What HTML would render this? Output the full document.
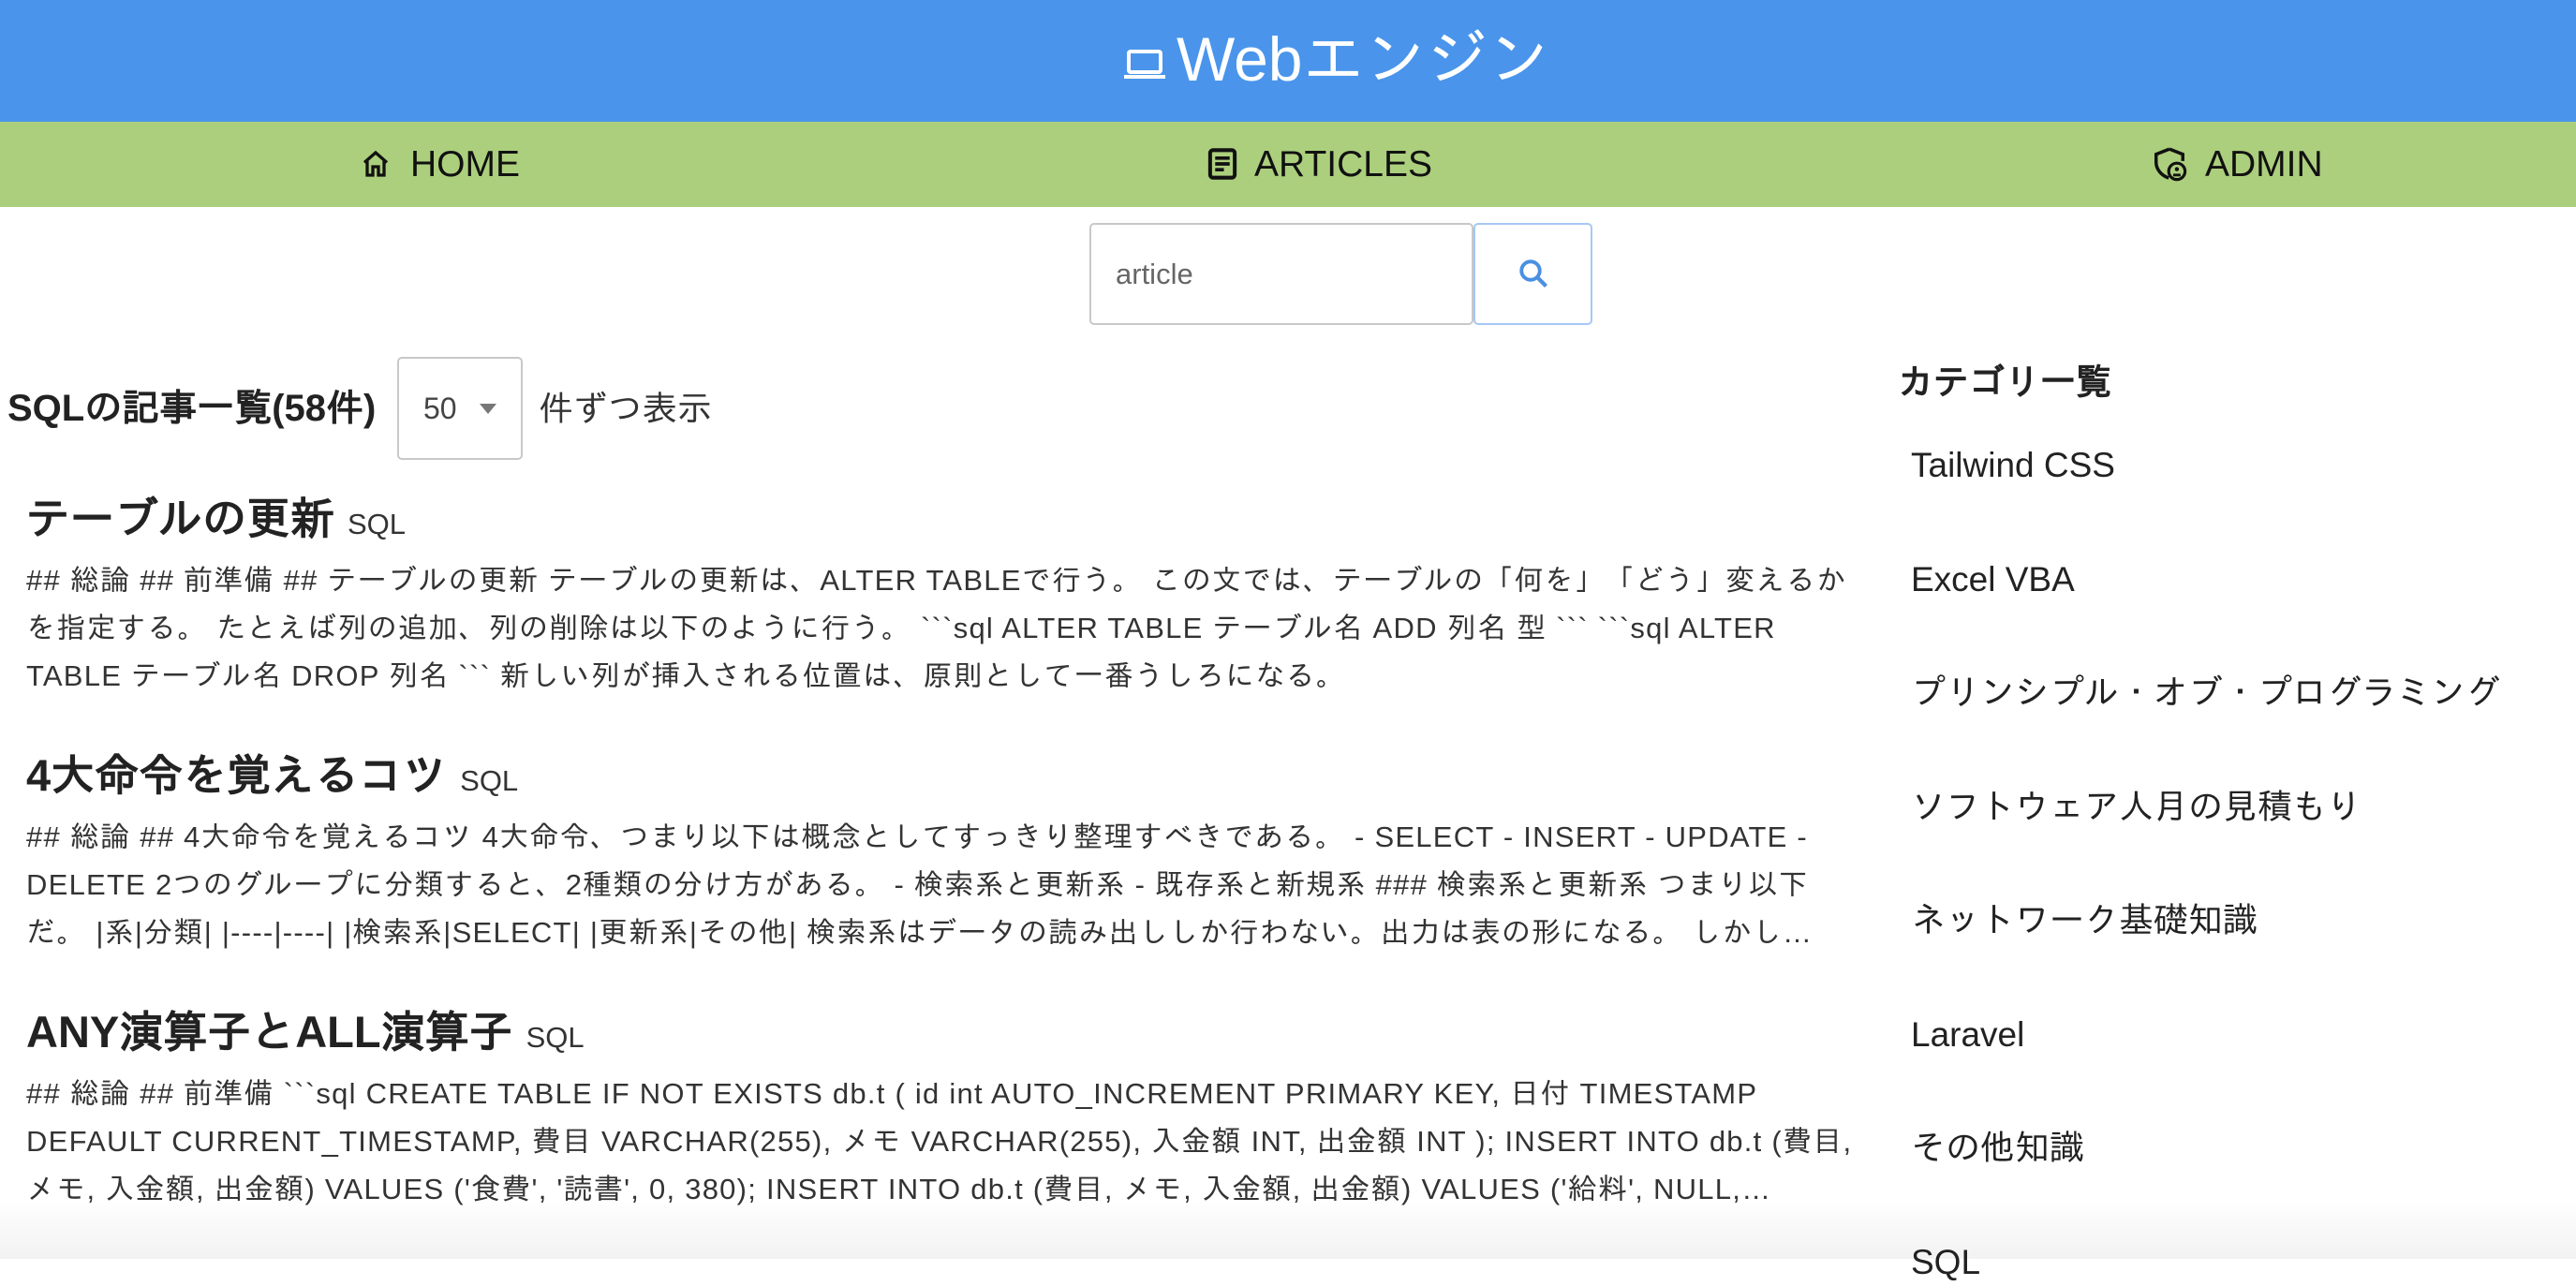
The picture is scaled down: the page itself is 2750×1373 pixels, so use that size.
<!DOCTYPE html>
<html><head><meta charset="utf-8"><style>
*{margin:0;padding:0;box-sizing:border-box}
html,body{width:2750px;height:1344px;background:#fff}
body{overflow:hidden;font-family:"Liberation Sans","IPAGothic","Noto Sans CJK JP",sans-serif;color:#222;position:relative}
.hdr{position:absolute;left:0;top:0;width:2750px;height:130px;background:#4a95eb}
.title{position:absolute;left:1200px;top:18px;color:#fff;font-size:66px;line-height:90px;white-space:nowrap}
.title svg{vertical-align:middle;margin-right:12px}
.nav{position:absolute;left:0;top:130px;width:2750px;height:91px;background:#accf7d}
.ni{position:absolute;top:0;height:91px;line-height:91px;font-size:39px;color:#111;white-space:nowrap}
.ni svg{vertical-align:middle;margin-right:18px;position:relative;top:-3px}
.inp{position:absolute;left:1163px;top:238px;width:410px;height:109px;border:2px solid #c8c8c8;border-radius:5px;font-size:31px;color:#666;padding-left:26px;line-height:105px}
.btn{position:absolute;left:1573px;top:238px;width:127px;height:109px;border:2px solid #a6c8f4;border-radius:5px;text-align:center;padding-top:34px}
.h{position:absolute;left:8px;top:414px;font-size:40px;font-weight:bold;color:#222;white-space:nowrap}
.sel{position:absolute;left:424px;top:381px;width:134px;height:110px;border:2px solid #c8c8c8;border-radius:5px;font-size:32px;color:#444;padding-left:26px;line-height:106px}
.sel span{position:absolute;left:86px;top:48px;width:0;height:0;border-left:9px solid transparent;border-right:9px solid transparent;border-top:11px solid #777}
.ken{position:absolute;left:575px;top:416px;font-size:37px;color:#333;white-space:nowrap}
.art{position:absolute;left:28px;width:1955px}
.art h2{font-size:47px;font-weight:bold;line-height:64px;color:#222;white-space:nowrap}
.art h2 small{font-size:31px;font-weight:normal;margin-left:14px;color:#333}
.art p{font-size:31px;letter-spacing:1.25px;line-height:51px;color:#333;margin-top:2px;height:153px;overflow:hidden}
.side{position:absolute;left:2026px;width:720px}
.side h3{font-size:38px;font-weight:bold;color:#222;white-space:nowrap}
.it{position:absolute;left:2040px;font-size:37px;color:#222;white-space:nowrap;line-height:50px}
.shadow{position:absolute;left:0;top:1280px;width:2750px;height:64px;background:linear-gradient(to bottom,rgba(0,0,0,0),rgba(0,0,0,0.05))}
</style></head><body>
<div class="hdr"><div class="title"><svg width="44" height="34" viewBox="0 0 44 34"><rect x="5" y="3" width="34" height="22" rx="2" fill="none" stroke="#fff" stroke-width="4"/><rect x="0" y="28" width="44" height="4" fill="#fff"/></svg>Webエンジン</div></div>
<div class="nav">
<div class="ni" style="left:382px"><svg width="38" height="36" viewBox="0 0 24 24"><path d="M4 11 12 4l8 7M6 10v10h4v-6h4v6h4V10" fill="none" stroke="#111" stroke-width="2.2"/></svg>HOME</div>
<div class="ni" style="left:1289px"><svg width="32" height="34" viewBox="0 0 20 22"><rect x="1.5" y="1.5" width="17" height="19" rx="2" fill="none" stroke="#111" stroke-width="2.6"/><path d="M5 7h10M5 11h10M5 15h6" stroke="#111" stroke-width="2.4"/></svg>ARTICLES</div>
<div class="ni" style="left:2296px"><svg width="40" height="38" viewBox="0 0 24 24"><path d="M12 2 3 5.5V11c0 5 4 9 8.5 10.5" fill="none" stroke="#111" stroke-width="2.2"/><path d="M12 2l9 3.5V10" fill="none" stroke="#111" stroke-width="2.2"/><circle cx="17" cy="17" r="5.5" fill="none" stroke="#111" stroke-width="2"/><circle cx="17" cy="15.5" r="1.4" fill="#111"/><path d="M14.5 19.5h5" stroke="#111" stroke-width="1.8"/></svg>ADMIN</div>
</div>
<div class="inp">article</div>
<div class="btn"><svg width="36" height="36" viewBox="0 0 24 24"><circle cx="10" cy="10" r="6.5" fill="none" stroke="#4a90e2" stroke-width="2.6"/><path d="M15 15l6 6" stroke="#4a90e2" stroke-width="2.8"/></svg></div>
<div class="h">SQLの記事一覧(58件)</div>
<div class="sel">50<span></span></div>
<div class="ken">件ずつ表示</div>
<div class="side" style="top:388px"><h3>カテゴリ一覧</h3></div>
<div class="it" style="top:472px">Tailwind CSS</div>
<div class="it" style="top:594px">Excel VBA</div>
<div class="it" style="top:715px">プリンシプル・オブ・プログラミング</div>
<div class="it" style="top:837px">ソフトウェア人月の見積もり</div>
<div class="it" style="top:958px">ネットワーク基礎知識</div>
<div class="it" style="top:1080px">Laravel</div>
<div class="it" style="top:1201px">その他知識</div>
<div class="it" style="top:1323px">SQL</div>
<div class="art" style="top:522px"><h2>テーブルの更新<small>SQL</small></h2><p>## 総論 ## 前準備 ## テーブルの更新 テーブルの更新は、ALTER TABLEで行う。 この文では、テーブルの「何を」「どう」変えるか<br>を指定する。 たとえば列の追加、列の削除は以下のように行う。 &#96;&#96;&#96;sql ALTER TABLE テーブル名 ADD 列名 型 &#96;&#96;&#96; &#96;&#96;&#96;sql ALTER TABLE テーブル名 DROP 列名 &#96;&#96;&#96; 新しい列が挿入される位置は、原則として一番うしろになる。</p></div>
<div class="art" style="top:796px"><h2>4大命令を覚えるコツ<small>SQL</small></h2><p>## 総論 ## 4大命令を覚えるコツ 4大命令、つまり以下は概念としてすっきり整理すべきである。 - SELECT - INSERT - UPDATE - DELETE 2つのグループに分類すると、2種類の分け方がある。 - 検索系と更新系 - 既存系と新規系 ### 検索系と更新系 つまり以下だ。 |系|分類| |----|----| |検索系|SELECT| |更新系|その他| 検索系はデータの読み出ししか行わない。出力は表の形になる。 しかし…</p></div>
<div class="art" style="top:1070px"><h2>ANY演算子とALL演算子<small>SQL</small></h2><p>## 総論 ## 前準備 &#96;&#96;&#96;sql CREATE TABLE IF NOT EXISTS db.t ( id int AUTO_INCREMENT PRIMARY KEY, 日付 TIMESTAMP DEFAULT CURRENT_TIMESTAMP, 費目 VARCHAR(255), メモ VARCHAR(255), 入金額 INT, 出金額 INT ); INSERT INTO db.t (費目, メモ, 入金額, 出金額) VALUES ('食費', '読書', 0, 380); INSERT INTO db.t (費目, メモ, 入金額, 出金額) VALUES ('給料', NULL,…</p></div>
<div class="shadow"></div>
</body></html>
